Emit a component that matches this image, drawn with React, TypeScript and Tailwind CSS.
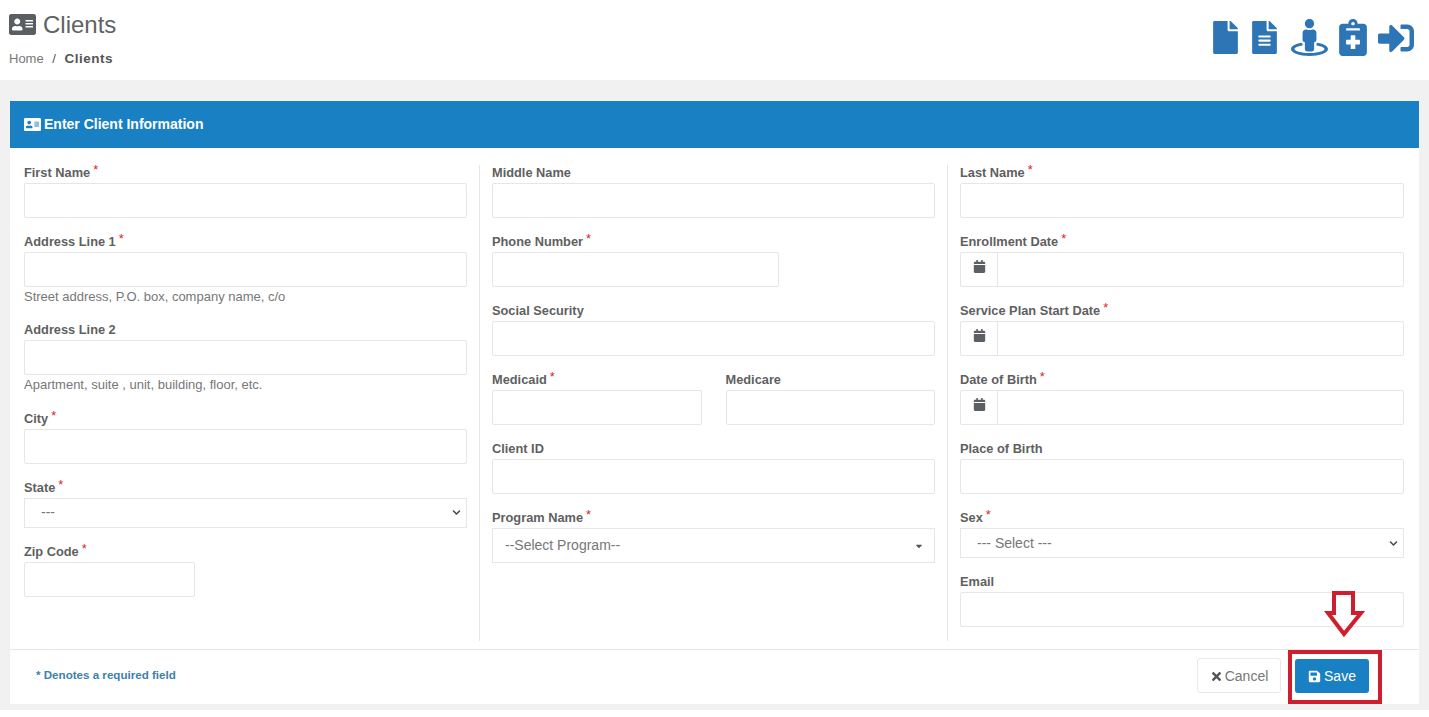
import { FaAddressCard, FaCalendar, FaCaretDown, FaChevronDown, FaFile, FaFileAlt, FaNotesMedical, FaSave, FaSignInAlt, FaStreetView, FaTimes } from "react-icons/fa";

const inputClass = "h-[35px] border border-[#e6e6e6] bg-white rounded-[2px]";

const Label = ({ text, required }: { text: string; required?: boolean }) => (
  <div className="h-[18px] text-[12.8px] leading-[15px] font-bold text-[#5f5f5f] whitespace-nowrap">
    {text}
    {required && <span className="ml-[3px] text-[#d22] font-normal relative top-[-3px]">*</span>}
  </div>
);

// Standard label + input block
const Field = ({ label, required, width, help, date }: { label: string; required?: boolean; width?: string; help?: string; date?: boolean }) => (
  <div className="mb-[16px]">
    <Label text={label} required={required} />
    {date ? (
      <div className={`${inputClass} flex`}>
        <div className="w-[37px] border-r border-[#e6e6e6] flex items-center justify-center pb-[7px]">
          <FaCalendar className="text-[#5c5f63] text-[13px]" />
        </div>
      </div>
    ) : (
      <div className={`${inputClass} ${width ?? "w-full"}`} />
    )}
    {help && <div className="text-[13px] leading-[19.4px] text-[#777]">{help}</div>}
  </div>
);

const SelectBox = ({ label, required, value }: { label: string; required?: boolean; value: string }) => (
  <div className="mb-[16px]">
    <Label text={label} required={required} />
    <div className="h-[30px] border border-[#e6e6e6] bg-white flex items-center justify-between pl-[16px] pr-[5px] text-[14px] text-[#777]">
      <span>{value}</span>
      <FaChevronDown className="text-[#444] text-[9px]" />
    </div>
  </div>
);

export default function App() {
  return (
    <div className="w-[1429px] h-[717px] bg-white overflow-hidden font-['Liberation_Sans',Arial,sans-serif] relative">
      {/* page header */}
      <div className="h-[80px] flex justify-between px-[9px]">
        <div>
          <div className="flex items-center gap-[7px] pt-[10px] h-[39px]">
            <FaAddressCard className="text-[#5a5d61] text-[27px]" />
            <h1 className="text-[24px] leading-[28px] text-[#5f6266]">Clients</h1>
          </div>
          <div className="mt-[11px] text-[13px] text-[#777] leading-[18px]">
            Home <span className="mx-[5px] text-[#555]">/</span> <b className="text-[#555] text-[13.5px] tracking-[0.5px]">Clients</b>
          </div>
        </div>
        <div className="flex items-center text-[#2e75b6] pr-[6px] pb-[5px]">
          <FaFile className="w-[25px] h-[33px]" />
          <FaFileAlt className="w-[25px] h-[33px] ml-[14px]" />
          <FaStreetView className="w-[37px] h-[37px] ml-[14px]" />
          <FaNotesMedical className="w-[28px] h-[37px] ml-[11px]" />
          <FaSignInAlt className="w-[36px] h-[36px] ml-[11px]" />
        </div>
      </div>

      <div className="bg-[#f1f1f1] h-[630px] pt-[21px] px-[10px]">
        <div className="bg-white h-[603px]">
          <div className="h-[47px] bg-[#1a80c4] flex items-center gap-[3px] pl-[14px] text-white font-bold text-[14px]">
            <FaAddressCard className="text-[17px]" />
            Enter Client Information
          </div>

          <div className="h-[502px] border-b border-[#e6e6e6] pl-[14px] pr-[15px] pt-[17px]">
            <div className="flex h-[476px]">
              <div className="w-[455px] pr-[12px] shrink-0">
                <Field label="First Name" required />
                <Field label="Address Line 1" required help="Street address, P.O. box, company name, c/o" />
                <Field label="Address Line 2" help="Apartment, suite , unit, building, floor, etc." />
                <Field label="City" required />
                <SelectBox label="State" required value="---" />
                <Field label="Zip Code" required width="w-[171px]" />
              </div>

              <div className="w-[468px] px-[12px] border-l border-[#e6e6e6] shrink-0">
                <Field label="Middle Name" />
                <Field label="Phone Number" required width="w-[287px]" />
                <Field label="Social Security" />
                <div className="flex gap-[24px]">
                  <div className="flex-1">
                    <Field label="Medicaid" required />
                  </div>
                  <div className="flex-1">
                    <Field label="Medicare" />
                  </div>
                </div>
                <Field label="Client ID" />
                <Label text="Program Name" required />
                <div className="h-[35px] border border-[#e6e6e6] flex items-center justify-between pl-[12px] pr-[10px] text-[14px] text-[#777]">
                  <span>--Select Program--</span>
                  <FaCaretDown className="text-[#555] text-[10px]" />
                </div>
              </div>

              <div className="flex-1 pl-[12px] border-l border-[#e6e6e6]">
                <Field label="Last Name" required />
                <Field label="Enrollment Date" required date />
                <Field label="Service Plan Start Date" required date />
                <Field label="Date of Birth" required date />
                <Field label="Place of Birth" />
                <SelectBox label="Sex" required value="--- Select ---" />
                <Field label="Email" />
              </div>
            </div>
          </div>

          <div className="h-[54px] flex items-center justify-between pl-[26px] pr-[37px]">
            <span className="text-[11.6px] font-bold text-[#3d81ad] pb-[5px]">* Denotes a required field</span>
            <div className="flex items-center gap-[7px]">
              <button className="w-[84px] h-[35px] mb-[3px] pt-[1px] border border-[#e9e9e9] rounded-[3px] flex items-center justify-center gap-[2px] text-[14px] text-[#777]">
                <FaTimes className="text-[#555] text-[13px]" />
                Cancel
              </button>
              <div className="w-[94px] h-[54px] border-[4px] border-[#cf1f2e] flex items-center pl-[3px]">
                <button className="w-[74px] h-[34px] mb-[2px] pt-[1px] bg-[#1a80c4] rounded-[3px] flex items-center justify-center gap-[3px] text-white text-[14px]">
                  <FaSave className="text-[13px]" />
                  Save
                </button>
              </div>
            </div>
          </div>
        </div>
      </div>

      {/* red annotation arrow */}
      <svg className="absolute left-[1324px] top-[589px]" width="42" height="49" viewBox="0 0 42 49" fill="none">
        <path d="M10 4 H29 V24 H37 L20 45 L4 24 H10 Z" stroke="#cf1f2e" strokeWidth="4" />
      </svg>
    </div>
  );
}
